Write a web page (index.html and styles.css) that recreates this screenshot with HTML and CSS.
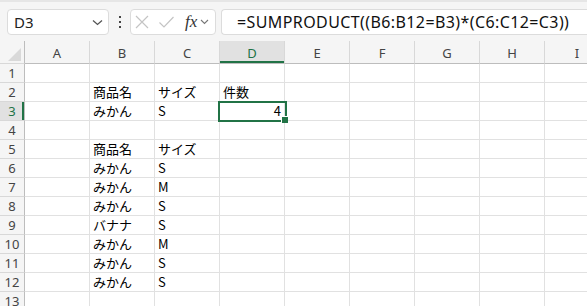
FILE: index.html
```html
<!DOCTYPE html>
<html lang="ja">
<head>
    <meta charset="UTF-8">
    <meta name="viewport" content="width=device-width, initial-scale=1.0">
    <title>SUMPRODUCT</title>
    <link rel="stylesheet" href="styles.css">
</head>
<body>

    <div class="toolbar">
        <div class="namebox">
            <span>D3</span>
            <svg class="chev" width="11" height="7" viewBox="0 0 11 7"><path d="M1 1.5 L5.5 5.5 L10 1.5" fill="none" stroke="#555" stroke-width="1.3"/></svg>
        </div>
        <svg class="dots" width="4" height="14" viewBox="0 0 4 14">
            <rect x="1" y="1" width="2" height="2" fill="#444"/>
            <rect x="1" y="6" width="2" height="2" fill="#444"/>
            <rect x="1" y="11" width="2" height="2" fill="#444"/>
        </svg>
        <div class="fxbox">
            <svg width="16" height="16" viewBox="0 0 16 16"><path d="M2 2 L14 14 M14 2 L2 14" stroke="#c4c4c4" stroke-width="1.2"/></svg>
            <svg width="17" height="16" viewBox="0 0 17 16"><path d="M1.5 8.5 L6 13 L15.5 3" fill="none" stroke="#c4c4c4" stroke-width="1.2"/></svg>
            <span class="fx">fx</span>
            <svg width="9" height="6" viewBox="0 0 9 6"><path d="M1 1 L4.5 4.5 L8 1" fill="none" stroke="#777" stroke-width="1.1"/></svg>
        </div>
        <div class="formula">=SUMPRODUCT((B6:B12=B3)*(C6:C12=C3))</div>
    </div>

    <div class="sheet">
        <div class="grid" id="grid"></div>
        <div class="selection"><span class="handle"></span></div>
    </div>

    <script>
        const cols = ['A', 'B', 'C', 'D', 'E', 'F', 'G', 'H', 'I'];
        // row number -> values for columns B, C, D
        const data = {
            2: ['商品名', 'サイズ', '件数'],
            3: ['みかん', 'S', 4],
            5: ['商品名', 'サイズ'],
            6: ['みかん', 'S'],
            7: ['みかん', 'M'],
            8: ['みかん', 'S'],
            9: ['バナナ', 'S'],
            10: ['みかん', 'M'],
            11: ['みかん', 'S'],
            12: ['みかん', 'S']
        };

        const grid = document.getElementById('grid');
        let html = '<div class="corner"><span class="tri"></span></div>';
        cols.forEach(c => {
            html += `<div class="colhead${c === 'D' ? ' active' : ''}">${c}</div>`;
        });

        for (let r = 1; r <= 13; r++) {
            html += `<div class="rowhead${r === 3 ? ' active' : ''}">${r}</div>`;
            const row = data[r] || [];
            cols.forEach((c, i) => {
                const v = i >= 1 ? row[i - 1] : undefined;
                if (v === undefined) {
                    html += '<div class="cell"></div>';
                } else if (typeof v === 'number') {
                    html += `<div class="cell num">${v}</div>`;
                } else {
                    html += `<div class="cell">${v}</div>`;
                }
            });
        }
        grid.innerHTML = html;
    </script>

</body>
</html>
```

FILE: styles.css
```css
body {
    margin: 0;
    width: 587px;
    height: 306px;
    overflow: hidden;
    background-color: #fff;
    font-family: "Noto Sans", "Noto Sans CJK JP", sans-serif;
}

.toolbar {
    height: 41px;
    box-sizing: border-box;
    border-top: 2px solid #e6e6e6;
    background-color: #f5f5f5;
    display: flex;
    align-items: center;
    padding-left: 7px;
}

.namebox {
    width: 102px;
    height: 26px;
    box-sizing: border-box;
    background-color: #fff;
    border: 1px solid #dcdcdc;
    border-radius: 4px;
    display: flex;
    align-items: center;
    justify-content: space-between;
    padding: 0 5px 0 6px;
    font-size: 15px;
    color: #222;
}

.chev {
    margin-top: 1px;
}

.dots {
    margin-left: 9px;
    margin-right: 8px;
}

.fxbox {
    width: 86px;
    height: 26px;
    box-sizing: border-box;
    background-color: #fff;
    border: 1px solid #dcdcdc;
    border-radius: 4px;
    display: flex;
    align-items: center;
    padding-left: 3px;
    gap: 8px;
}

.fx {
    font-family: "Liberation Serif", serif;
    font-style: italic;
    font-size: 17px;
    color: #333;
    margin-left: 2px;
    margin-right: -5px;
}

.formula {
    flex: 1;
    height: 26px;
    box-sizing: border-box;
    margin-left: 5px;
    background-color: #fff;
    border: 1px solid #dcdcdc;
    border-right: none;
    border-radius: 4px 0 0 4px;
    padding-left: 15px;
    font-size: 16px;
    letter-spacing: 0.4px;
    line-height: 24px;
    color: #111;
    white-space: nowrap;
}

.sheet {
    position: relative;
}

.grid {
    display: grid;
    grid-template-columns: 25px repeat(9, 65px);
    grid-template-rows: 23px;
    grid-auto-rows: 19px;
}

.grid > div {
    box-sizing: border-box;
    border-right: 1px solid #e1e1e1;
    border-bottom: 1px solid #e1e1e1;
}

.corner,
.colhead,
.rowhead {
    background-color: #f5f5f5;
    color: #444;
    font-size: 13px;
    display: flex;
    align-items: center;
    justify-content: center;
}

.grid > .corner,
.grid > .colhead {
    border-bottom: 1px solid #bdbdbd;
    border-right-color: #d8d8d8;
}

.grid > .rowhead,
.grid > .corner {
    border-right: 1px solid #bdbdbd;
    border-bottom-color: #d8d8d8;
}

.corner {
    position: relative;
}

.tri {
    position: absolute;
    right: 3px;
    bottom: 2px;
    width: 0;
    height: 0;
    border-left: 13px solid transparent;
    border-bottom: 13px solid #d9d9d9;
}

.colhead {
    padding-top: 2px;
}

.colhead.active {
    background-color: #e1e1e1;
    box-shadow: inset 0 -2px 0 #217346;
    color: #217346;
}

.rowhead.active {
    background-color: #e1e1e1;
    box-shadow: inset -2px 0 0 #217346;
    color: #217346;
}

.cell {
    font-family: "Noto Sans CJK JP", sans-serif;
    font-size: 13px;
    line-height: 18px;
    padding-left: 3px;
    color: #000;
    white-space: nowrap;
}

.cell.num {
    text-align: right;
    padding-right: 3px;
}

.selection {
    position: absolute;
    left: 218px;
    top: 60px;
    width: 69px;
    height: 21px;
    box-sizing: border-box;
    border: 2px solid #217346;
}

.handle {
    position: absolute;
    right: -3px;
    bottom: -3px;
    width: 6px;
    height: 6px;
    background-color: #217346;
    box-shadow: -1px -1px 0 #fff;
}
```
